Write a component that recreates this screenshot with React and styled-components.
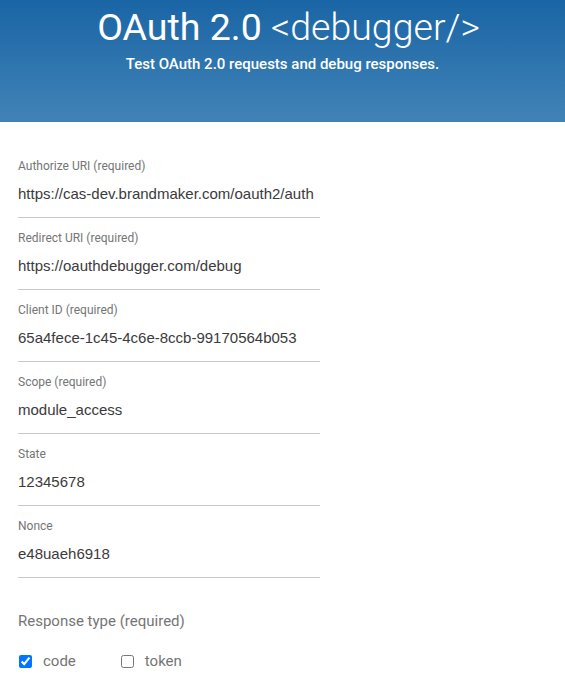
import React from 'react';
import styled, { createGlobalStyle } from 'styled-components';

const GlobalStyle = createGlobalStyle`
  body {
    margin: 0;
    background: #fff;
    font-family: Roboto, "Liberation Sans", sans-serif;
  }
`;

const fields = [
  { label: 'Authorize URI (required)', value: 'https://cas-dev.brandmaker.com/oauth2/auth' },
  { label: 'Redirect URI (required)', value: 'https://oauthdebugger.com/debug' },
  { label: 'Client ID (required)', value: '65a4fece-1c45-4c6e-8ccb-99170564b053' },
  { label: 'Scope (required)', value: 'module_access' },
  { label: 'State', value: '12345678' },
  { label: 'Nonce', value: 'e48uaeh6918' },
];

function App() {
  return (
    <>
      <GlobalStyle />
      <Header>
        <Title>
          OAuth 2.0 <Light>&lt;debugger/&gt;</Light>
        </Title>
        <Subtitle>Test OAuth 2.0 requests and debug responses.</Subtitle>
      </Header>
      <Form>
        {fields.map((f) => (
          <Field key={f.label}>
            <Label>{f.label}</Label>
            <Input defaultValue={f.value} readOnly />
          </Field>
        ))}
        <Group>
          <GroupLabel>Response type (required)</GroupLabel>
          <Checks>
            <Check>
              <input type='checkbox' defaultChecked />
              <span>code</span>
            </Check>
            <Check>
              <input type='checkbox' />
              <span>token</span>
            </Check>
          </Checks>
        </Group>
      </Form>
    </>
  );
}

const Header = styled.header`
  height: 122px;
  box-sizing: border-box;
  padding-top: 5px;
  background: linear-gradient(180deg, #1a65a5 0%, #4183b7 100%);
  color: #fff;
  text-align: center;
`;

const Title = styled.h1`
  margin: 0;
  padding-left: 12px;
  font-size: 37.5px;
  font-weight: 400;
  line-height: 44px;
`;

const Light = styled.span`
  font-weight: 300;
`;

const Subtitle = styled.p`
  margin: 6px 0 0;
  font-size: 15px;
  font-weight: 500;
  line-height: 18px;
`;

const Form = styled.main`
  padding: 37px 18px 0;
  width: 302px;
`;

const Field = styled.div`
  display: flex;
  flex-direction: column;
  border-bottom: 1px solid #c8c8c8;
  margin-bottom: 13px;
`;

const Label = styled.label`
  font-size: 12px;
  color: #757575;
  line-height: 14px;
`;

const Input = styled.input`
  border: none;
  outline: none;
  padding: 0;
  margin: 10px 0 14px;
  height: 20px;
  font-family: "Liberation Sans", Arial, sans-serif;
  font-size: 15px;
  color: #3b3b3b;
  background: transparent;
`;

const Group = styled.div`
  padding-top: 21px;
`;

const GroupLabel = styled.div`
  font-size: 15px;
  color: #757575;
  line-height: 18px;
`;

const Checks = styled.div`
  display: flex;
  gap: 44px;
  margin-top: 22px;
`;

const Check = styled.label`
  display: flex;
  align-items: center;
  gap: 11px;
  font-size: 15px;
  line-height: 18px;
  color: #757575;

  input {
    margin: 0 0 0 1px;
    width: 13px;
    height: 13px;
  }
`;

export default App;
